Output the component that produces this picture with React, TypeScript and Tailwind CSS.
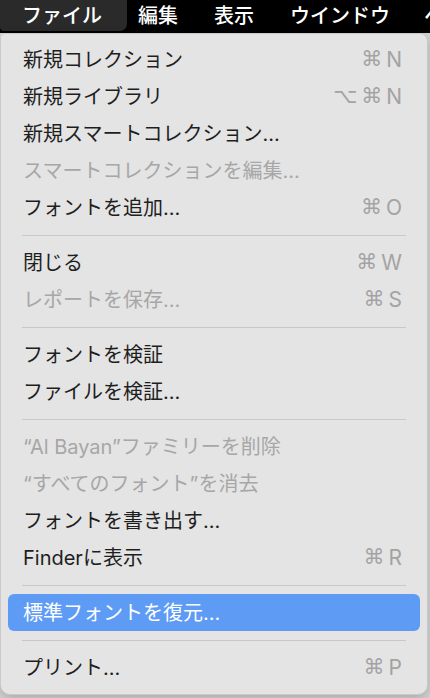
import React from "react";

type Item = {
  label: string;
  shortcut?: string;
  disabled?: boolean;
  active?: boolean;
};

type Entry = Item | "sep";

const entries: Entry[] = [
  { label: "新規コレクション", shortcut: "⌘N" },
  { label: "新規ライブラリ", shortcut: "⌥⌘N" },
  { label: "新規スマートコレクション…" },
  { label: "スマートコレクションを編集…", disabled: true },
  { label: "フォントを追加…", shortcut: "⌘O" },
  "sep",
  { label: "閉じる", shortcut: "⌘W" },
  { label: "レポートを保存…", shortcut: "⌘S", disabled: true },
  "sep",
  { label: "フォントを検証" },
  { label: "ファイルを検証…" },
  "sep",
  { label: "“Al Bayan”ファミリーを削除", disabled: true },
  { label: "“すべてのフォント”を消去", disabled: true },
  { label: "フォントを書き出す…" },
  { label: "Finderに表示", shortcut: "⌘R" },
  "sep",
  { label: "標準フォントを復元…", active: true },
  "sep",
  { label: "プリント…", shortcut: "⌘P" },
];

const font = {
  fontFamily: '"Inter", "Noto Sans CJK JP", sans-serif',
};

const MenuRow = ({ item }: { item: Item }) => {
  const textColor = item.active
    ? "text-white"
    : item.disabled
      ? "text-[#a7a7a7]"
      : "text-[#1e1e1e]";

  return (
    <div
      className={`mx-[7px] flex h-[37px] items-center justify-between rounded-[6px] pl-[15px] pr-[18px] ${
        item.active ? "bg-[#5e9bf5]" : ""
      }`}
    >
      <span className={`whitespace-nowrap text-[20px] leading-none ${textColor}`}>
        {item.label}
      </span>
      {item.shortcut && (
        <span className="flex items-center gap-[4px] text-[21px] leading-none text-[#a3a3a3]">
          {item.shortcut.split("").map((c, i) => (
            <span
              key={i}
              style={
                c === "⌘" || c === "⌥"
                  ? { fontFamily: '"DejaVu Sans", sans-serif', fontSize: 21 }
                  : undefined
              }
            >
              {c}
            </span>
          ))}
        </span>
      )}
    </div>
  );
};

export default function App() {
  return (
    <div
      className="flex h-[698px] w-[430px] flex-col overflow-hidden bg-[#d4d4d4]"
      style={font}
    >
      <div className="flex h-[33px] shrink-0 overflow-hidden whitespace-nowrap bg-black text-[20px] font-medium leading-none text-white">
        <div className="flex h-[31px] w-[127px] shrink-0 items-center rounded-br-[7px] rounded-bl-[4px] bg-[#2a2a2a] pl-[22px]">
          ファイル
        </div>
        <div className="ml-[11px] flex h-[31px] shrink-0 items-center gap-[36px]">
          <span>編集</span>
          <span>表示</span>
          <span>ウインドウ</span>
          <span className="ml-[-2px]">ヘ</span>
        </div>
      </div>

      <div className="flex w-[428px] flex-col rounded-b-[10px] rounded-tr-[8px] rounded-tl-[4px] border border-[#c9c9c9] bg-[#e4e4e4] pb-[8px] pt-[7px] shadow-[0_4px_12px_rgba(0,0,0,0.2)]">
        {entries.map((e, i) =>
          e === "sep" ? (
            <div key={i} className="flex h-[18px] items-center px-[21px]">
              <div className="h-px w-full bg-[#c8c8c8]" />
            </div>
          ) : (
            <MenuRow key={i} item={e} />
          )
        )}
      </div>
    </div>
  );
}
